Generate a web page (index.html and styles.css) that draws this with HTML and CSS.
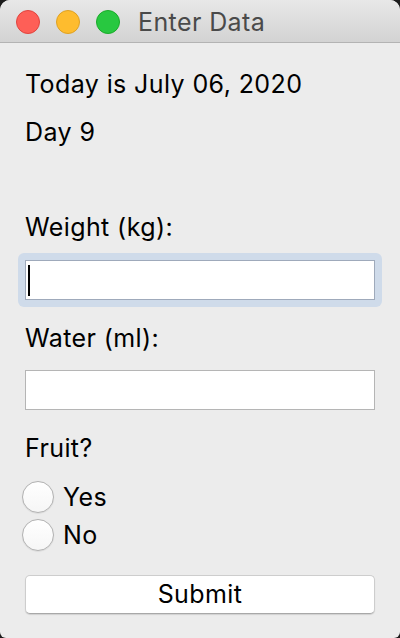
FILE: index.html
```html
<!DOCTYPE html>
<html lang="en">
<head>
<meta charset="utf-8">
<title>Enter Data</title>
<link rel="stylesheet" href="styles.css">
</head>
<body>
<div class="window">
  <div class="titlebar">
    <span class="light red"></span>
    <span class="light yellow"></span>
    <span class="light green"></span>
    <span class="title">Enter Data</span>
  </div>
  <div class="content">
    <div class="line today">Today is July 06, 2020</div>
    <div class="line day">Day 9</div>
    <div class="line label weight-label">Weight (kg):</div>
    <div class="ring">
      <div class="field focused"><span class="caret"></span></div>
    </div>
    <div class="line label water-label">Water (ml):</div>
    <div class="field plain"></div>
    <div class="line label fruit-label">Fruit?</div>
    <div class="radios">
      <div class="radio"><span class="circle"></span><span class="rtext">Yes</span></div>
      <div class="radio"><span class="circle"></span><span class="rtext">No</span></div>
    </div>
    <div class="button">Submit</div>
  </div>
</div>
</body>
</html>
```
FILE: styles.css
```css
html, body {
  margin: 0;
  padding: 0;
  background: #1c1c1c;
}
body {
  width: 400px;
  height: 638px;
  overflow: hidden;
  font-family: "Inter", "Liberation Sans", sans-serif;
  font-weight: 400;
  letter-spacing: 0.4px;
  color: #000;
}
.window {
  width: 400px;
  height: 638px;
  background: #ececec;
  border-radius: 10px 10px 6px 6px;
  overflow: hidden;
  display: flex;
  flex-direction: column;
}
.titlebar {
  height: 43px;
  flex: none;
  box-sizing: border-box;
  border-bottom: 1px solid #b3b3b3;
  background: linear-gradient(#e8e8e8, #d3d3d3);
  display: flex;
  align-items: center;
  padding-left: 16px;
  gap: 16px;
}
.light {
  width: 24px;
  height: 24px;
  border-radius: 50%;
  box-sizing: border-box;
  flex: none;
  margin-top: 1px;
}
.red { background: #fe5f57; border: 1px solid #e0443e; }
.yellow { background: #febc2e; border: 1px solid #dea123; }
.green { background: #28c840; border: 1px solid #1aab29; }
.title {
  margin-left: 2px;
  font-size: 25px;
  line-height: 30px;
  color: #4a4a4a;
  margin-top: 1px;
}
.content {
  padding: 0 25px;
  display: flex;
  flex-direction: column;
}
.line {
  font-size: 25px;
  line-height: 30px;
  height: 30px;
  white-space: nowrap;
}
.today { margin-top: 26px; }
.day { margin-top: 18px; }
.weight-label { margin-top: 65px; }
.ring {
  margin: 11px -7px 0;
  padding: 7px;
  border-radius: 6px;
  background: #cfdbea;
}
.field {
  height: 40px;
  box-sizing: border-box;
  background: #fff;
  display: flex;
  align-items: center;
}
.focused { border: 1px solid #9faabb; }
.plain { border: 1px solid #b5b5b5; margin-top: 17px; }
.caret {
  width: 2px;
  height: 31px;
  background: #000;
  margin-left: 2px;
}
.water-label { margin-top: 16px; }
.fruit-label { margin-top: 23px; }
.radios {
  margin-top: 18px;
  margin-left: -3px;
  display: flex;
  flex-direction: column;
  gap: 6px;
}
.radio {
  display: flex;
  align-items: center;
  height: 32px;
  gap: 9px;
}
.circle {
  width: 32px;
  height: 32px;
  box-sizing: border-box;
  border-radius: 50%;
  border: 1px solid #b2b2b2;
  background: linear-gradient(#ffffff, #f6f6f6);
  box-shadow: 0 0.5px 1px rgba(0,0,0,0.12);
  flex: none;
}
.rtext {
  font-size: 25px;
  line-height: 30px;
}
.button {
  margin-top: 24px;
  height: 39px;
  box-sizing: border-box;
  background: #fff;
  border-radius: 5px;
  border: 1px solid #cdcdcd;
  border-bottom-color: #a8a8a8;
  box-shadow: 0 1px 1px rgba(0,0,0,0.12);
  font-size: 25px;
  line-height: 37px;
  text-align: center;
}
```
